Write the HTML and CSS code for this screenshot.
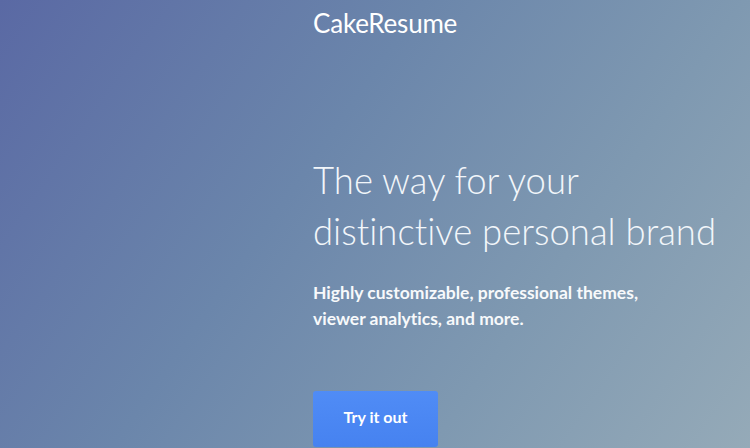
FILE: index.html
```html
<!DOCTYPE html>
<html>
<head>
    <title>CakeResume</title>
    <link rel="stylesheet" href="styles.css">
</head>
<body>
    <div class="hero">
        <header class="brand">CakeResume</header>
        <section class="intro">
            <h1>The way for your<br>distinctive personal brand</h1>
            <p>Highly customizable, professional themes,<br>viewer analytics, and more.</p>
            <a class="try-button" href="#">Try it out</a>
        </section>
    </div>
</body>
</html>
```

FILE: styles.css
```css
body {
    margin: 0;
    font-family: Lato, "Open Sans", sans-serif;
    font-variant-ligatures: none;
    color: #fff;
}

.hero {
    height: 448px;
    overflow: hidden;
    padding-left: 313px;
    background: linear-gradient(125deg, #5a69a4 0%, #6b86ab 40%, #7f99b1 70%, #95aab8 100%);
}

.brand {
    padding-top: 7px;
    font-size: 26px;
    font-weight: 400;
    line-height: 32px;
    letter-spacing: -0.2px;
}

.intro {
    padding-top: 116px;
}

.intro h1 {
    margin: 0;
    font-size: 36.5px;
    font-weight: 300;
    line-height: 51px;
    color: #f2f6fa;
}

.intro p {
    margin: 23px 0 0;
    font-size: 17.5px;
    font-weight: 700;
    line-height: 26px;
    color: #f7f9fb;
}

.try-button {
    display: inline-block;
    margin-top: 59px;
    width: 125px;
    height: 56px;
    line-height: 52px;
    text-align: center;
    background: linear-gradient(#508cf6, #4682f0);
    color: #fff;
    text-decoration: none;
    font-size: 16px;
    font-weight: 700;
    border-radius: 3px;
}
```
